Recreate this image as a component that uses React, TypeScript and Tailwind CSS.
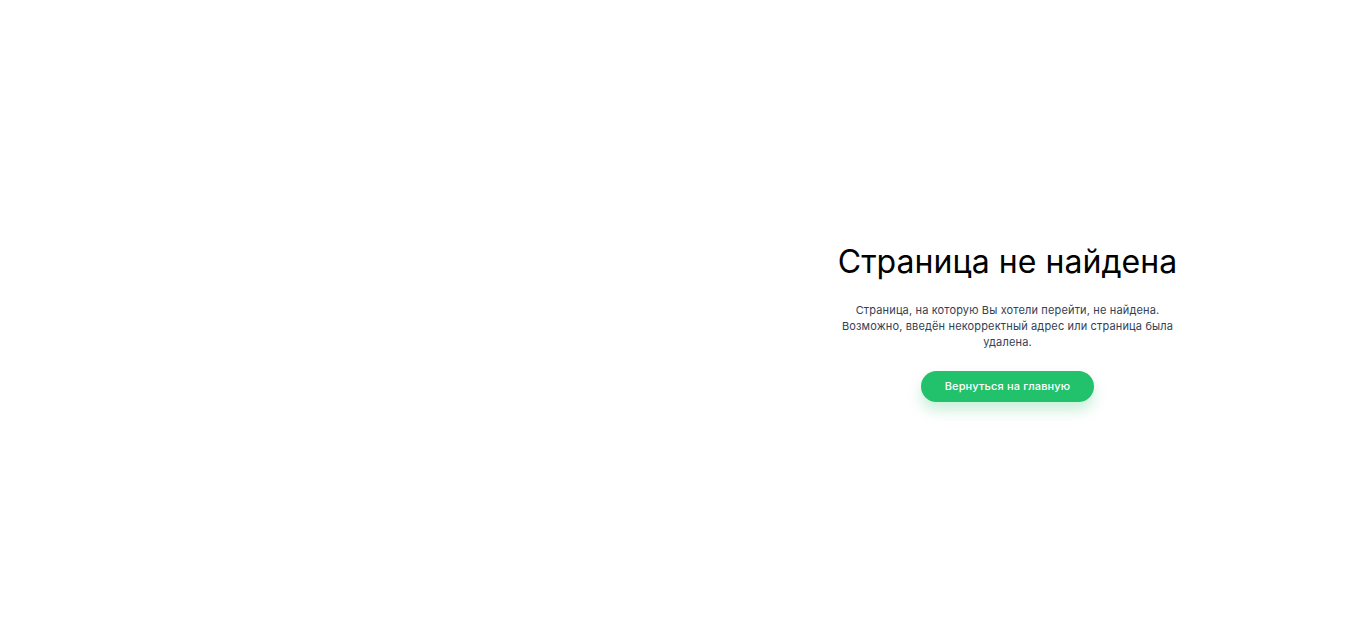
export default function App() {
  return (
    <div className="min-h-screen w-full bg-white flex">
      <div className="w-[662px] shrink-0" />
      <div className="flex-1 flex flex-col items-center justify-center text-center font-['Inter',sans-serif]">
        <h1 className="text-[32px] leading-[40px] font-normal text-black tracking-[0.05px]">
          Страница не найдена
        </h1>
        <p className="mt-[20px] text-[11px] leading-[16px] text-[#334155] tracking-[0.15px] max-w-[345px]">
          Страница, на которую Вы хотели перейти, не найдена. Возможно, введён некорректный адрес или страница была удалена.
        </p>
        <button className="mt-[21px] h-[31px] px-[24px] rounded-full bg-[#22c16b] text-white text-[11px] font-medium tracking-[0.15px] shadow-[0_8px_14px_rgba(34,193,107,0.25)]">
          Вернуться на главную
        </button>
      </div>
    </div>
  );
}
